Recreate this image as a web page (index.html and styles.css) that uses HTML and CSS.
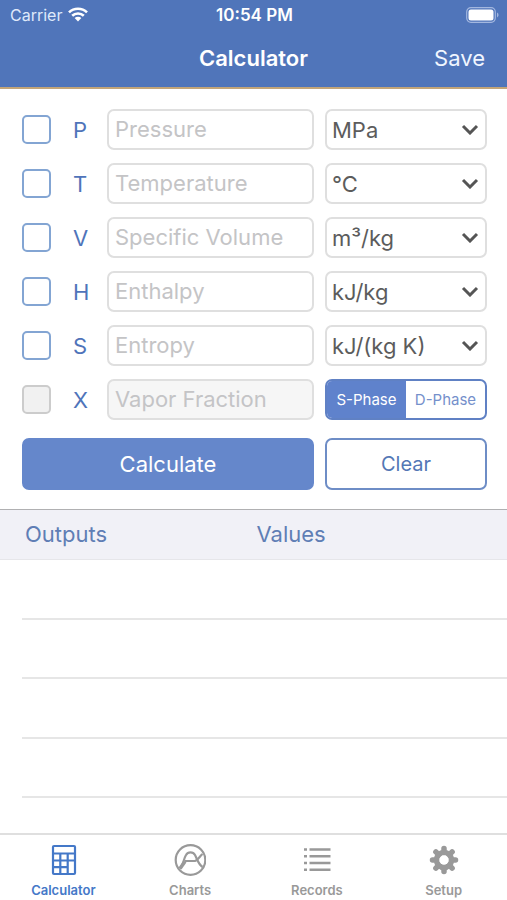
FILE: index.html
```html
<!DOCTYPE html>
<html lang="en">
<head>
<meta charset="utf-8">
<meta name="viewport" content="width=device-width, initial-scale=1">
<title>Calculator</title>
<link rel="stylesheet" href="styles.css">
</head>
<body>
<header class="top">
  <div class="status">
    <span class="carrier">Carrier
      <svg class="wifi" viewBox="0 0 20 15" aria-hidden="true"><g fill="none" stroke="currentColor" stroke-width="2.6"><path d="M1 5.4a12.8 12.8 0 0 1 18 0"/><path d="M4.2 8.8a8.3 8.3 0 0 1 11.6 0"/></g><path d="M6.6 11.1a4.9 4.9 0 0 1 6.8 0L10 14.6z" fill="currentColor"/></svg>
    </span>
    <time class="clock">10:54 PM</time>
    <svg class="battery" viewBox="0 0 33 16" aria-hidden="true"><rect x=".7" y=".7" width="28.6" height="14.6" rx="4.2" fill="none" stroke="#a3b7df" stroke-width="1.2"/><rect x="2.5" y="2.5" width="25" height="11" rx="2.5" fill="#fff"/><path d="M31 5.6q1.6.9 1.6 2.4T31 10.4z" fill="#a3b7df"/></svg>
  </div>
  <div class="nav">
    <h1 class="title">Calculator</h1>
    <button class="save" type="button">Save</button>
  </div>
</header>

<main class="main">
  <form class="form">
    <div class="row">
      <input class="check" type="checkbox" id="use-p"><label class="symbol" for="use-p">P</label>
      <input class="field" type="text" placeholder="Pressure" aria-label="Pressure">
      <div class="unit"><select class="select" aria-label="Pressure unit"><option>MPa</option></select><svg class="chevron" viewBox="0 0 18 11" aria-hidden="true"><path d="M2 2l7 7 7-7"/></svg></div>
    </div>
    <div class="row">
      <input class="check" type="checkbox" id="use-t"><label class="symbol" for="use-t">T</label>
      <input class="field" type="text" placeholder="Temperature" aria-label="Temperature">
      <div class="unit"><select class="select" aria-label="Temperature unit"><option>°C</option></select><svg class="chevron" viewBox="0 0 18 11" aria-hidden="true"><path d="M2 2l7 7 7-7"/></svg></div>
    </div>
    <div class="row">
      <input class="check" type="checkbox" id="use-v"><label class="symbol" for="use-v">V</label>
      <input class="field" type="text" placeholder="Specific Volume" aria-label="Specific Volume">
      <div class="unit"><select class="select" aria-label="Specific volume unit"><option>m³/kg</option></select><svg class="chevron" viewBox="0 0 18 11" aria-hidden="true"><path d="M2 2l7 7 7-7"/></svg></div>
    </div>
    <div class="row">
      <input class="check" type="checkbox" id="use-h"><label class="symbol" for="use-h">H</label>
      <input class="field" type="text" placeholder="Enthalpy" aria-label="Enthalpy">
      <div class="unit"><select class="select" aria-label="Enthalpy unit"><option>kJ/kg</option></select><svg class="chevron" viewBox="0 0 18 11" aria-hidden="true"><path d="M2 2l7 7 7-7"/></svg></div>
    </div>
    <div class="row">
      <input class="check" type="checkbox" id="use-s"><label class="symbol" for="use-s">S</label>
      <input class="field" type="text" placeholder="Entropy" aria-label="Entropy">
      <div class="unit"><select class="select" aria-label="Entropy unit"><option>kJ/(kg K)</option></select><svg class="chevron" viewBox="0 0 18 11" aria-hidden="true"><path d="M2 2l7 7 7-7"/></svg></div>
    </div>
    <div class="row">
      <input class="check" type="checkbox" id="use-x" disabled><label class="symbol" for="use-x">X</label>
      <input class="field" type="text" placeholder="Vapor Fraction" aria-label="Vapor Fraction" disabled>
      <div class="segments" role="radiogroup" aria-label="Phase">
        <label class="segment"><input class="segment-input" type="radio" name="phase" checked>S-Phase</label>
        <label class="segment"><input class="segment-input" type="radio" name="phase">D-Phase</label>
      </div>
    </div>
    <div class="actions">
      <button class="button primary" type="button">Calculate</button>
      <button class="button" type="reset">Clear</button>
    </div>
  </form>

  <table class="results">
    <thead><tr><th scope="col">Outputs</th><th scope="col">Values</th></tr></thead>
    <tbody>
      <tr><td></td><td></td></tr>
      <tr><td></td><td></td></tr>
      <tr><td></td><td></td></tr>
      <tr><td></td><td></td></tr>
    </tbody>
  </table>
</main>

<nav class="tabs">
  <a class="tab active" href="#calculator">
    <svg class="icon" viewBox="0 0 32 32" aria-hidden="true"><g fill="none" stroke="currentColor" stroke-width="2.2"><rect x="6" y="2" width="22" height="28" rx="1"/><path d="M6 9.500h22M6 16.500h22M6 23.200h15M13.300 9.500V30M20.700 9.500V30"/></g></svg>
    Calculator
  </a>
  <a class="tab" href="#charts">
    <svg class="icon" viewBox="0 0 32 32" aria-hidden="true"><g fill="none" stroke="currentColor" stroke-width="2.2"><circle cx="16.500" cy="16" r="14.800"/><path d="M6 24.500C9.500 21 9.500 15 12 11C14 7.500 19 7.500 21 11C23.500 15.500 24 20 28.500 23"/><path d="M11 17H21C24 16 25.500 12.500 28.500 10"/><path d="M6 24.500L11 17.500" stroke-width="3.600"/></g></svg>
    Charts
  </a>
  <a class="tab" href="#records">
    <svg class="icon" viewBox="0 0 32 32" aria-hidden="true"><path d="M3 5.500h3M8.500 5.500h21M3 12.200h3M8.500 12.200h21M3 19h3M8.500 19h21M3 25.700h3M8.500 25.700h21" stroke="currentColor" stroke-width="2.400"/></svg>
    Records
  </a>
  <a class="tab" href="#setup">
    <svg class="icon" viewBox="0 0 32 32" aria-hidden="true"><g stroke="currentColor" stroke-width="5.500" stroke-linecap="round"><path d="M16 4.500V9M16 23v4.500M4.500 16H9M23 16h4.500M7.900 7.900l3.200 3.200M20.900 20.900l3.200 3.200M24.100 7.900l-3.200 3.200M11.100 20.900l-3.200 3.200"/></g><circle cx="16" cy="16" r="7.500" fill="none" stroke="currentColor" stroke-width="5.500"/><circle cx="16" cy="16" r="4.700" fill="#fff"/></svg>
    Setup
  </a>
</nav>
</body>
</html>
```
FILE: styles.css
```css
* { box-sizing: border-box; }

body {
  margin: 0;
  min-height: 100vh;
  display: flex;
  flex-direction: column;
  background: #fff;
  color: #4f74ba;
  font-family: Inter, "Liberation Sans", sans-serif;
  font-size: 22px;
}

button, input, select { font: inherit; margin: 0; }

.top {
  height: 89px;
  background: #5075ba;
  color: #fff;
  border-bottom: 2px solid #c3a578;
}

.status {
  display: grid;
  grid-template-columns: 1fr auto 1fr;
  align-items: center;
  height: 29px;
  padding: 0 8px 0 10px;
  font-size: 16px;
}

.carrier {
  display: flex;
  align-items: center;
  gap: 6px;
  color: #dfe9fa;
}

.wifi { width: 20px; height: 15px; color: #fff; }
.clock { font-size: 17px; font-weight: 600; }
.battery { width: 33px; height: 16px; justify-self: end; }

.nav {
  display: grid;
  grid-template-columns: 1fr auto 1fr;
  align-items: center;
  height: 58px;
  padding: 0 22px;
}

.title {
  grid-column: 2;
  margin: 0;
  font-size: 22px;
  font-weight: 600;
}

.save {
  justify-self: end;
  padding: 0;
  border: 0;
  background: none;
  color: #f0f6ff;
}

.main { flex: 1; }

.form {
  display: flex;
  flex-direction: column;
  gap: 13px;
  padding: 20px 20px 19px 22px;
}

.row {
  display: grid;
  grid-template-columns: 29px 56px minmax(0, 1fr) 162px;
  align-items: center;
}

.check {
  appearance: none;
  width: 29px;
  height: 29px;
  border: 2px solid #83a5d3;
  border-radius: 5px;
  background: #fff;
}

.check:disabled { border-color: #ccc; background: #f1f1f1; }

.symbol { padding-left: 22px; }

.field, .select {
  height: 41px;
  border: 2px solid #dfdfdf;
  border-radius: 7px;
  background: #fff;
}

.field {
  min-width: 0;
  margin-right: 11px;
  padding: 0 6px 2px;
  color: #555;
}

.field::placeholder { color: #c4c4c6; opacity: 1; }
.field:disabled { background: #f6f6f6; }

.unit { position: relative; display: flex; }

.select {
  appearance: none;
  width: 100%;
  padding: 0 30px 0 5px;
  color: #5c5c5c;
}

.chevron {
  position: absolute;
  right: 8px;
  top: 15px;
  width: 18px;
  height: 11px;
  fill: none;
  stroke: #555;
  stroke-width: 3;
  pointer-events: none;
}

.segments {
  display: grid;
  grid-template-columns: 1fr 1fr;
  height: 41px;
  overflow: hidden;
  border: 2px solid #6081c4;
  border-radius: 7px;
}

.segment {
  display: grid;
  place-items: center;
  color: #7590cb;
  font-size: 15px;
}

.segment:has(:checked) { background: #5f82cc; color: #fff; }

.segment-input {
  position: absolute;
  opacity: 0;
  pointer-events: none;
}

.actions {
  display: grid;
  grid-template-columns: minmax(0, 1fr) 162px;
  gap: 11px;
  padding-top: 5px;
}

.button {
  height: 52px;
  padding: 0;
  border: 2px solid #6e8dc6;
  border-radius: 7px;
  background: #fff;
  color: #5377b5;
  font-size: 20px;
}

.primary {
  border-color: #6587cb;
  background: #6587cb;
  color: #fff;
  font-size: 22px;
}

.results {
  width: 100%;
  table-layout: fixed;
  border-collapse: separate;
  border-spacing: 0;
}

.results th {
  height: 51px;
  padding: 0 0 2px 25px;
  border-top: 1px solid #b0b0b2;
  border-bottom: 1px solid #e6e6ea;
  background: #f1f1f7;
  color: #5f7eb5;
  font-weight: 400;
  text-align: left;
}

.results th + th { padding-left: 3px; }

.results td {
  height: 60px;
  padding: 0;
  background: linear-gradient(#e6e6e6, #e6e6e6) 0 100% / 100% 2px no-repeat;
}

.results tr:nth-child(even) td { height: 59px; }
.results td:first-child { background-position: 22px 100%; }

.tabs {
  display: grid;
  grid-template-columns: repeat(4, 1fr);
  height: 67px;
  border-top: 2px solid #dfdfdf;
  background: #fff;
}

.tab {
  display: flex;
  flex-direction: column;
  align-items: center;
  gap: 6px;
  padding-top: 9px;
  color: #999;
  font-size: 13px;
  font-weight: 600;
  line-height: 16px;
  text-decoration: none;
}

.active { color: #4478c8; }
.icon { width: 32px; height: 32px; }
```
